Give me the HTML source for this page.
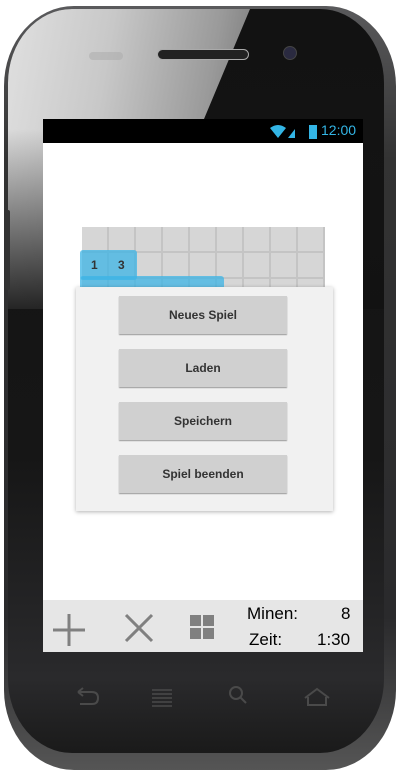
<!DOCTYPE html>
<html><head><style>
body{margin:0;width:400px;height:772px;background:#fff;position:relative;overflow:hidden;font-family:"Liberation Sans",sans-serif}
.phone{position:absolute;left:4px;top:6px;width:392px;height:764px;border-radius:70px/80px;background:linear-gradient(#5a5a5c,#333 20%,#2a2a2c 80%,#555 100%);}
.inner{position:absolute;left:8px;top:9px;width:376px;height:744px;border-radius:64px/74px;background:linear-gradient(#121212,#161616 60%,#2a2a2c 90%,#1a1a1a);overflow:hidden}
.glare{position:absolute;left:0;top:0;width:376px;height:300px;clip-path:polygon(0 0,242px 0,196px 110px,150px 300px,0 300px);background:linear-gradient(100deg,#e0e0e0 0%,#c8c8c8 25%,#9a9a9a 50%,#707070 65%)}
.glare2{position:absolute;left:0;top:0;width:376px;height:300px;background:linear-gradient(180deg,rgba(0,0,0,0) 40%,rgba(18,18,18,.9) 100%)}
.screen{position:absolute;left:43px;top:119px;width:320px;height:533px;background:#fff;overflow:hidden}
.status{position:absolute;left:0;top:0;width:320px;height:24px;background:#000}
.cell{position:absolute;width:25px;height:24px;background:#d6d6d6;border-right:2px solid #c4c4c4;border-bottom:2px solid #c4c4c4}
.blue{position:absolute;background:rgba(60,180,230,.75);border-radius:3px}
.dlg{position:absolute;left:33px;top:168px;width:257px;height:224px;background:#f1f1f1;box-shadow:0 1px 4px rgba(0,0,0,.3)}
.btn{position:absolute;left:43px;width:168px;height:38px;background:#d0d0d0;box-shadow:0 1px 1px #999;font-weight:bold;font-size:12px;color:#333;text-align:center;line-height:38px}
.bar{position:absolute;left:0;top:481px;width:320px;height:52px;background:#e6e6e6}
</style></head><body>
<div class="phone"></div>
<div class="inner"><div class="glare"></div><div class="glare2"></div></div>
<div style="position:absolute;left:157px;top:49px;width:90px;height:9px;border-radius:6px;background:#222;border:1px solid #aaa"></div>
<div style="position:absolute;left:89px;top:52px;width:34px;height:8px;border-radius:5px;background:#aaa;opacity:.5"></div>
<div style="position:absolute;left:283px;top:46px;width:12px;height:12px;border-radius:50%;background:#2a2a40;border:1px solid #444"></div>
<div style="position:absolute;left:5px;top:210px;width:5px;height:80px;background:#333;border-radius:2px"></div>
<div class="screen">
 <div class="status">
  <svg style="position:absolute;left:227px;top:5px" width="26" height="16" viewBox="0 0 26 16"><path d="M0 4 Q8 -2 16 4 L8 14Z" fill="#33b5e5"/><path d="M18 14 L25 5 L25 14Z" fill="#33b5e5"/></svg>
  <div style="position:absolute;left:266px;top:6px;width:8px;height:14px;background:#33b5e5"></div>
  <div style="position:absolute;left:278px;top:3px;color:#33b5e5;font-size:14px">12:00</div>
 </div>
 <div id="grid"></div>
 <div class="blue" style="left:37px;top:131px;width:57px;height:30px"></div>
 <div class="blue" style="left:37px;top:157px;width:144px;height:20px"></div>
 <div style="position:absolute;left:48px;top:139px;font-weight:bold;font-size:12px;color:#333">1</div>
 <div style="position:absolute;left:75px;top:139px;font-weight:bold;font-size:12px;color:#333">3</div>
 <div class="dlg">
  <div class="btn" style="top:9px">Neues Spiel</div>
  <div class="btn" style="top:62px">Laden</div>
  <div class="btn" style="top:115px">Speichern</div>
  <div class="btn" style="top:168px">Spiel beenden</div>
 </div>
 <div class="bar">
  <svg style="position:absolute;left:6px;top:10px" width="40" height="40"><path d="M20 4V36M4 20H36" stroke="#808080" stroke-width="3"/></svg>
  <svg style="position:absolute;left:80px;top:12px" width="32" height="32"><path d="M3 3L29 29M29 3L3 29" stroke="#808080" stroke-width="3"/></svg>
  <div style="position:absolute;left:147px;top:15px;width:11px;height:11px;background:#808080"></div>
  <div style="position:absolute;left:160px;top:15px;width:11px;height:11px;background:#808080"></div>
  <div style="position:absolute;left:147px;top:28px;width:11px;height:11px;background:#808080"></div>
  <div style="position:absolute;left:160px;top:28px;width:11px;height:11px;background:#808080"></div>
  <div style="position:absolute;left:204px;top:4px;font-size:17px">Minen:</div>
  <div style="position:absolute;left:298px;top:4px;font-size:17px">8</div>
  <div style="position:absolute;left:206px;top:30px;font-size:17px">Zeit:</div>
  <div style="position:absolute;left:274px;top:30px;font-size:17px">1:30</div>
 </div>
</div>
<svg style="position:absolute;left:0;top:680px" width="400" height="40" fill="none" stroke="#4a4a4a" stroke-width="2">
 <path d="M78 12H92Q98 12 98 18Q98 24 92 24H80M78 12L83 8M78 12L83 16"/>
 <path d="M152 10H172M152 14H172M152 18H172M152 22H172M152 26H172" stroke-width="1.5"/>
 <circle cx="236" cy="13" r="6"/><path d="M240 17L246 23"/>
 <path d="M305 18L317 9L329 18M308 17V25H326V17"/>
</svg>
<script>
var g=document.getElementById('grid'),h='';
for(var r=0;r<3;r++)for(var c=0;c<9;c++)h+='<div class="cell" style="left:'+(39+c*27)+'px;top:'+(108+r*26)+'px"></div>';
g.innerHTML=h;
</script>
</body></html>
